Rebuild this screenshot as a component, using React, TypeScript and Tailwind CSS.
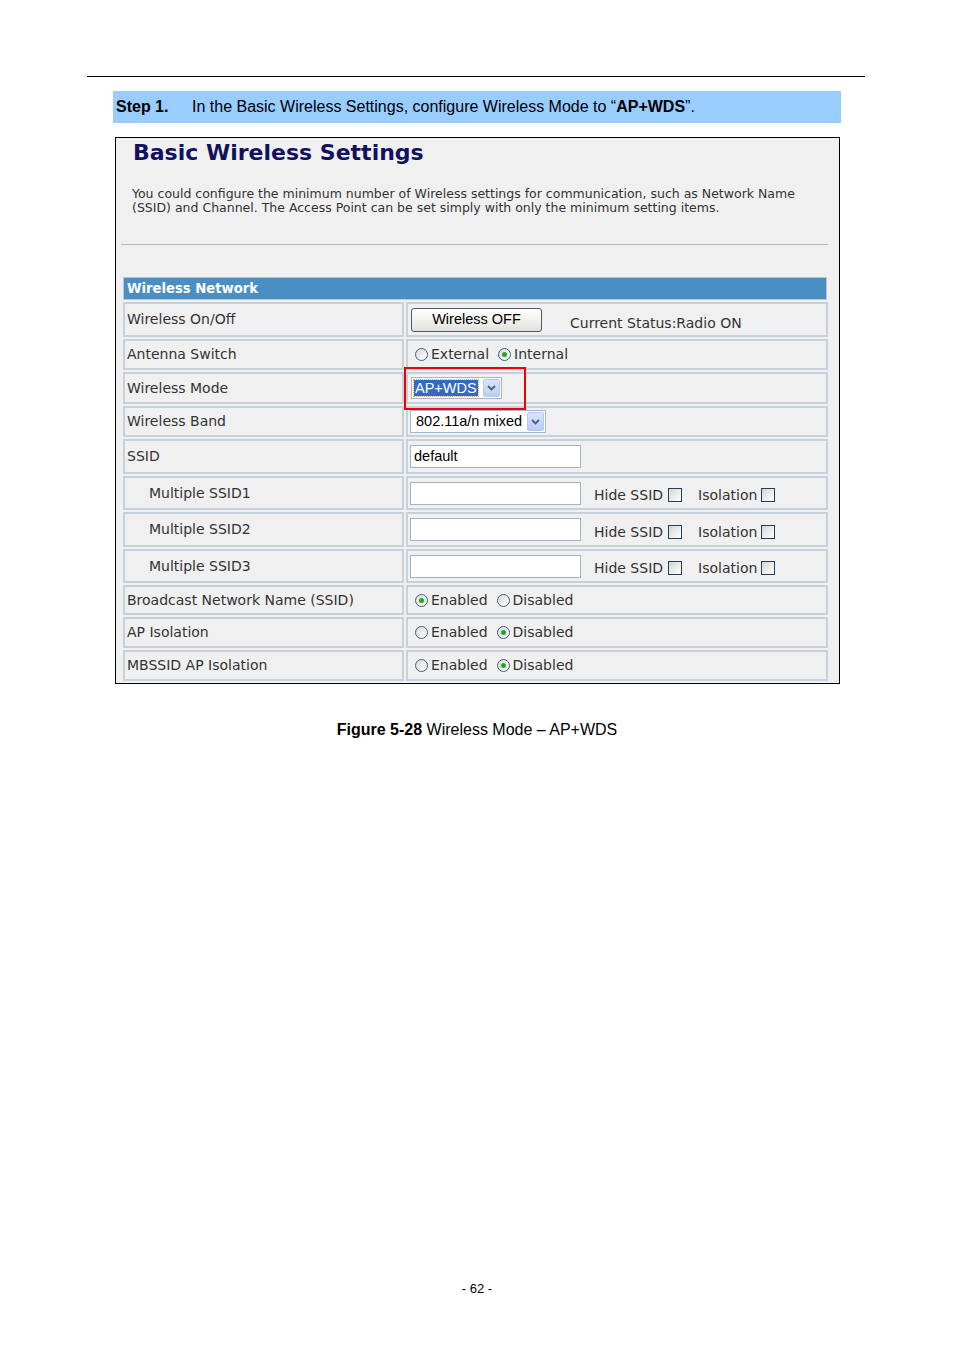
import React from "react";

const V = "font-['DejaVu_Sans',Verdana,sans-serif]";
const A = "font-['Liberation_Sans',Arial,sans-serif]";

const Radio = ({ checked }: { checked?: boolean }) => (
  <span className="flex w-[13px] h-[13px] rounded-full border border-[#3f6288] bg-linear-to-br from-[#d8d8d4] to-white items-center justify-center shrink-0">
    {checked && <span className="w-[5px] h-[5px] rounded-full bg-[#22a62a]" />}
  </span>
);

const Check = () => (
  <span className="block w-[14px] h-[14px] border border-[#1f4066] bg-linear-to-br from-[#d6d6d0] to-white shrink-0" />
);

const Chevron = () => (
  <svg width="9" height="6" viewBox="0 0 9 6">
    <path d="M1 1 L4.5 4.5 L8 1" fill="none" stroke="#4a5f86" strokeWidth="1.8" />
  </svg>
);

const ArrowBtn = () => (
  <span className="w-[17px] self-stretch m-[1px] rounded-[2px] bg-linear-to-b from-[#dbe5fb] to-[#b9cdf5] border border-[#b6c8ee] flex items-center justify-center">
    <Chevron />
  </span>
);

const cellL = "border-2 border-[#c6d1dc] w-[281px] flex items-center";
const cellR = "border-2 border-[#c6d1dc] w-[422px] flex items-center relative";

const Row = ({
  label,
  h,
  indent,
  children,
}: {
  label: string;
  h: string;
  indent?: boolean;
  children?: React.ReactNode;
}) => (
  <div className={`flex gap-[2px] ${h}`}>
    <div className={`${cellL} ${indent ? "pl-[24px]" : "pl-[2px]"}`}>
      <span className={`${V} text-[14px] text-[#333]`}>{label}</span>
    </div>
    <div className={cellR}>{children}</div>
  </div>
);

const RadioPair = ({ a, b, first }: { a: string; b: string; first: boolean }) => (
  <div className={`flex items-center ml-[7px] ${V} text-[14px] text-[#333]`}>
    <Radio checked={first} />
    <span className="ml-[3px]">{a}</span>
    <span className="ml-[9px] flex items-center"><Radio checked={!first} /></span>
    <span className="ml-[3px]">{b}</span>
  </div>
);

const MultiContent = () => (
  <div className="flex items-center ml-[2px]">
    <span className="w-[171px] h-[23px] border border-[#9fb4cc] bg-white" />
    <span className={`${V} text-[14px] text-[#333] ml-[13px] mt-[5px]`}>Hide SSID</span>
    <span className="ml-[5px] mt-[4px]"><Check /></span>
    <span className={`${V} text-[14px] text-[#333] ml-[16px] mt-[5px]`}>Isolation</span>
    <span className="ml-[4px] mt-[4px]"><Check /></span>
  </div>
);

export default function App() {
  return (
    <div className="w-[954px] h-[1350px] bg-white flex flex-col">
      <div className="mt-[76px] ml-[87px] w-[778px] h-px bg-black" />

      <div className={`mt-[14px] ml-[113px] w-[728px] h-[32px] bg-[#99ccff] flex items-center ${A} text-[16px] text-black`}>
        <span className="ml-[3px] w-[76px] font-bold">Step 1.</span>
        <span>
          In the Basic Wireless Settings, configure Wireless Mode to “<b>AP+WDS</b>”.
        </span>
      </div>

      <div className="mt-[14px] ml-[115px] w-[725px] h-[547px] border border-black bg-[#f0f0f0] flex flex-col">
        <div className={`mt-[3px] ml-[17px] h-[24px] leading-[24px] ${V} font-bold text-[22px] text-[#111160]`}>
          Basic Wireless Settings
        </div>
        <div className={`mt-[22px] ml-[16px] w-[700px] ${V} text-[12.5px] leading-[14px] text-[#333]`}>
          You could configure the minimum number of Wireless settings for communication, such as Network Name
          <br />
          (SSID) and Channel. The Access Point can be set simply with only the minimum setting items.
        </div>
        <div className="mt-[29px] ml-[5px] w-[707px] h-px bg-[#bdb8a2]" />

        <div className="mt-[32px] ml-[7px] flex flex-col gap-[2px]">
          <div className="w-[704px] h-[23px] border border-[#b5c6d6] bg-[#4a8fc4] flex items-center pl-[3px]">
            <span className={`${V} font-bold text-[13.2px] text-white`}>Wireless Network</span>
          </div>

          <Row label="Wireless On/Off" h="h-[35px]">
            <div className="flex items-center ml-[3px]">
              <span className={`w-[131px] h-[24px] rounded-[3px] border border-[#4f5a66] bg-linear-to-b from-white to-[#e2e2dc] flex items-center justify-center ${A} text-[14.5px] text-black`}>
                Wireless OFF
              </span>
              <span className={`${V} text-[14px] text-[#333] ml-[28px] mt-[8px]`}>Current Status:Radio ON</span>
            </div>
          </Row>

          <Row label="Antenna Switch" h="h-[31px]">
            <RadioPair a="External" b="Internal" first={false} />
          </Row>

          <Row label="Wireless Mode" h="h-[32px]">
            <div className="flex ml-[3px] w-[91px] h-[22px] border border-[#a4b7cd] bg-white">
              <span className="ml-[2px] my-[2px] px-[1px] bg-[#316ac5] outline-1 outline-dotted outline-[#d9b24a] flex items-center">
                <span className={`${A} text-[14.5px] text-white leading-none`}>AP+WDS</span>
              </span>
              <span className="ml-auto flex"><ArrowBtn /></span>
            </div>
            <div className="absolute left-[-4px] top-[-7px] w-[122px] h-[43px] border-2 border-[#f00000] z-10" />
          </Row>

          <Row label="Wireless Band" h="h-[31px]">
            <div className="flex ml-[2px] w-[136px] h-[23px] border border-[#a4b7cd] bg-white">
              <span className={`ml-[5px] flex items-center ${A} text-[14.5px] text-black`}>802.11a/n mixed</span>
              <span className="ml-auto flex"><ArrowBtn /></span>
            </div>
          </Row>

          <Row label="SSID" h="h-[35px]">
            <div className={`ml-[2px] w-[171px] h-[23px] border border-[#9fb4cc] bg-white flex items-center pl-[3px] ${A} text-[14.5px] text-black`}>
              default
            </div>
          </Row>

          <Row label="Multiple SSID1" h="h-[34px]" indent>
            <MultiContent />
          </Row>
          <Row label="Multiple SSID2" h="h-[35px]" indent>
            <MultiContent />
          </Row>
          <Row label="Multiple SSID3" h="h-[34px]" indent>
            <MultiContent />
          </Row>

          <Row label="Broadcast Network Name (SSID)" h="h-[30px]">
            <RadioPair a="Enabled" b="Disabled" first={true} />
          </Row>
          <Row label="AP Isolation" h="h-[31px]">
            <RadioPair a="Enabled" b="Disabled" first={false} />
          </Row>
          <Row label="MBSSID AP Isolation" h="h-[31px]">
            <RadioPair a="Enabled" b="Disabled" first={false} />
          </Row>
        </div>
      </div>

      <div className={`mt-[34px] text-center ${A} text-[16px] text-black`}>
        <b>Figure 5-28</b> Wireless Mode – AP+WDS
      </div>

      <div className={`mt-auto mb-[52px] text-center ${A} text-[13px] text-black`}>- 62 -</div>
    </div>
  );
}
